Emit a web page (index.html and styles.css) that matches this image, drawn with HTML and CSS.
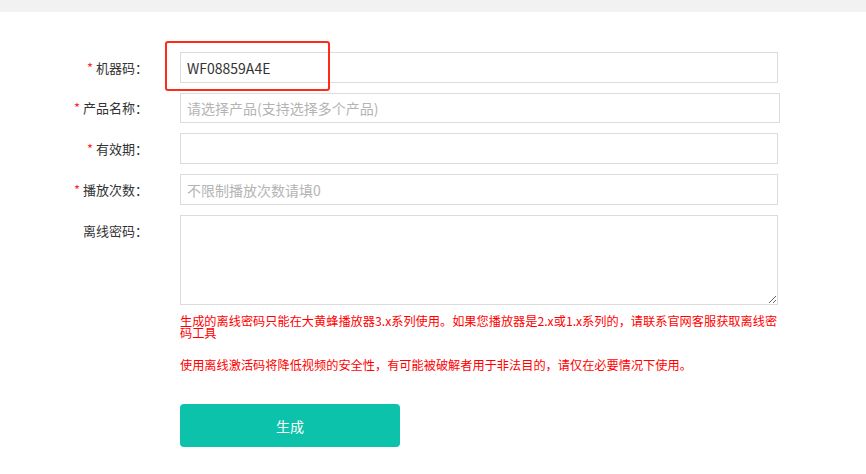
FILE: index.html
```html
<!DOCTYPE html>
<html lang="zh-CN">
<head>
<meta charset="utf-8">
<title>离线密码</title>
<link rel="stylesheet" href="styles.css">
</head>
<body>
<div class="topbar"></div>
<div class="page">
  <form class="form">
    <div class="row">
      <label class="label"><span class="star">*</span> 机器码：</label>
      <input class="field" type="text" value="WF08859A4E">
    </div>
    <div class="row row-wide">
      <label class="label"><span class="star">*</span> 产品名称：</label>
      <input class="field field-wide" type="text" placeholder="请选择产品(支持选择多个产品)">
    </div>
    <div class="row">
      <label class="label"><span class="star">*</span> 有效期：</label>
      <input class="field" type="text">
    </div>
    <div class="row">
      <label class="label"><span class="star">*</span> 播放次数：</label>
      <input class="field" type="text" placeholder="不限制播放次数请填0">
    </div>
    <div class="row row-area">
      <label class="label">离线密码：</label>
      <textarea class="area"></textarea>
    </div>
    <div class="body">
      <p class="hint hint-first">生成的离线密码只能在大黄蜂播放器3.x系列使用。如果您播放器是2.x或1.x系列的，请联系官网客服获取离线密码工具</p>
      <p class="hint hint-second">使用离线激活码将降低视频的安全性，有可能被破解者用于非法目的，请仅在必要情况下使用。</p>
      <button class="submit" type="button">生成</button>
    </div>
  </form>
  <div class="highlight"></div>
</div>
</body>
</html>
```

FILE: styles.css
```css
html, body {
  margin: 0;
  padding: 0;
  background: #ffffff;
}

body {
  font-family: "Noto Sans CJK SC", "Noto Sans", sans-serif;
  color: #333333;
}

.topbar {
  height: 12px;
  background: #f2f2f2;
}

.page {
  position: relative;
  padding-top: 40px;
}

.form {
  margin: 0;
}

.row {
  display: flex;
  align-items: flex-start;
  margin-bottom: 10px;
}

.label {
  width: 148px;
  margin-right: 32px;
  text-align: right;
  font-size: 13px;
  line-height: 31px;
  color: #333333;
  white-space: nowrap;
}

.row-wide .label {
  line-height: 30px;
}

.star {
  color: #ff2a2a;
}

.field {
  width: 598px;
  height: 31px;
  box-sizing: border-box;
  margin: 0;
  padding: 0 6px;
  border: 1px solid #dcdcdc;
  border-radius: 0;
  outline: none;
  font-family: "Noto Sans CJK SC", "Noto Sans", sans-serif;
  font-size: 14px;
  color: #333333;
  background: #ffffff;
}

.field-wide {
  width: 600px;
  height: 30px;
}

.field::placeholder {
  color: #b4b4b4;
}

.row-area {
  margin-bottom: 0;
}

.area {
  width: 598px;
  height: 90px;
  box-sizing: border-box;
  margin: 0;
  padding: 4px 6px;
  border: 1px solid #dcdcdc;
  border-radius: 0;
  outline: none;
  font-family: "Noto Sans CJK SC", "Noto Sans", sans-serif;
  font-size: 14px;
  color: #333333;
}

.body {
  margin-left: 180px;
  width: 598px;
}

.hint {
  margin: 0;
  font-size: 12.2px;
  line-height: 12px;
  color: #ff0000;
}

.hint-first {
  margin-top: 10px;
}

.hint-second {
  margin-top: 20px;
}

.submit {
  display: block;
  margin-top: 33px;
  width: 220px;
  height: 43px;
  border: none;
  border-radius: 4px;
  background: #0dc2aa;
  color: #ffffff;
  font-family: "Noto Sans CJK SC", "Noto Sans", sans-serif;
  font-size: 14px;
  cursor: pointer;
}

.highlight {
  position: absolute;
  left: 165px;
  top: 29px;
  width: 165px;
  height: 50px;
  box-sizing: border-box;
  border: 2px solid #ff2a1a;
  border-radius: 3px;
  pointer-events: none;
}
```
